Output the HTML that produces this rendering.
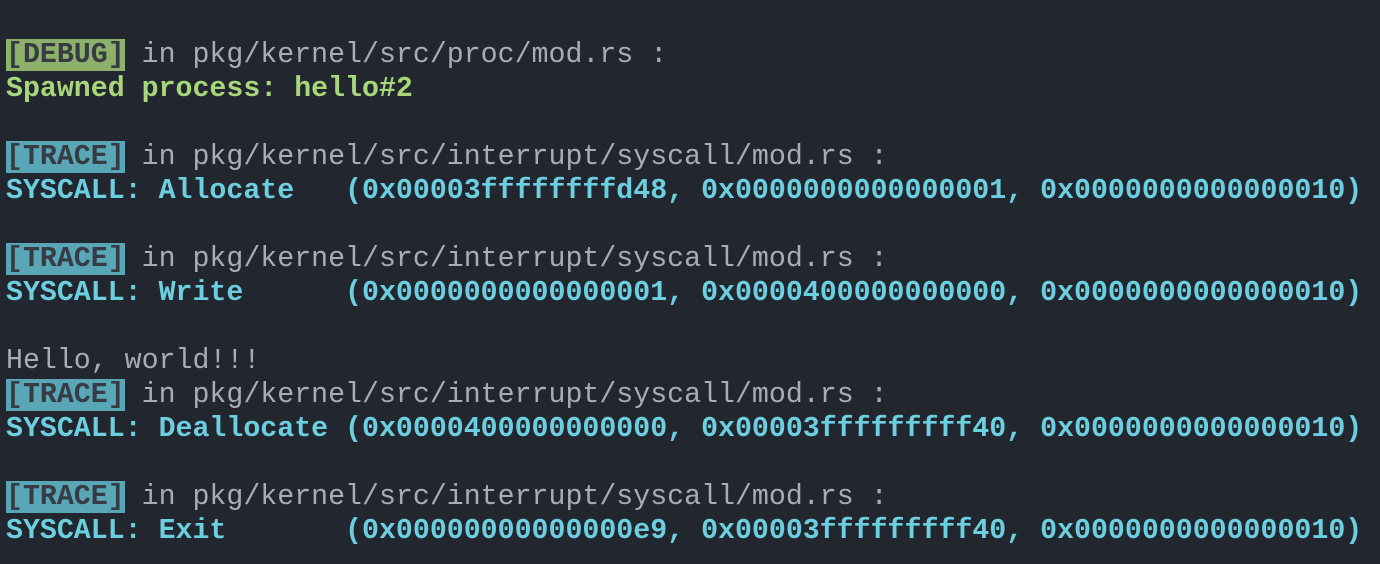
<!DOCTYPE html>
<html><head><style>
html,body{margin:0;padding:0;background:#22262e;width:1380px;height:564px;overflow:hidden}
pre{margin:0;padding:38px 0 0 6px;font-family:"Liberation Mono",monospace;font-size:28.25px;line-height:34px;color:#a9acb4;white-space:pre}
.d{background:#8db16a;color:#373b43;font-weight:bold}
.t{background:#58a6b6;color:#373b43;font-weight:bold}
.g{color:#a8d67a;font-weight:bold}
.c{color:#6ccfe0;font-weight:bold}
</style></head><body><pre><span class="d">[DEBUG]</span> in pkg/kernel/src/proc/mod.rs :
<span class="g">Spawned process: hello#2</span>

<span class="t">[TRACE]</span> in pkg/kernel/src/interrupt/syscall/mod.rs :
<span class="c">SYSCALL: Allocate   (0x00003ffffffffd48, 0x0000000000000001, 0x0000000000000010)</span>

<span class="t">[TRACE]</span> in pkg/kernel/src/interrupt/syscall/mod.rs :
<span class="c">SYSCALL: Write      (0x0000000000000001, 0x0000400000000000, 0x0000000000000010)</span>

Hello, world!!!
<span class="t">[TRACE]</span> in pkg/kernel/src/interrupt/syscall/mod.rs :
<span class="c">SYSCALL: Deallocate (0x0000400000000000, 0x00003fffffffff40, 0x0000000000000010)</span>

<span class="t">[TRACE]</span> in pkg/kernel/src/interrupt/syscall/mod.rs :
<span class="c">SYSCALL: Exit       (0x00000000000000e9, 0x00003fffffffff40, 0x0000000000000010)</span></pre></body></html>
